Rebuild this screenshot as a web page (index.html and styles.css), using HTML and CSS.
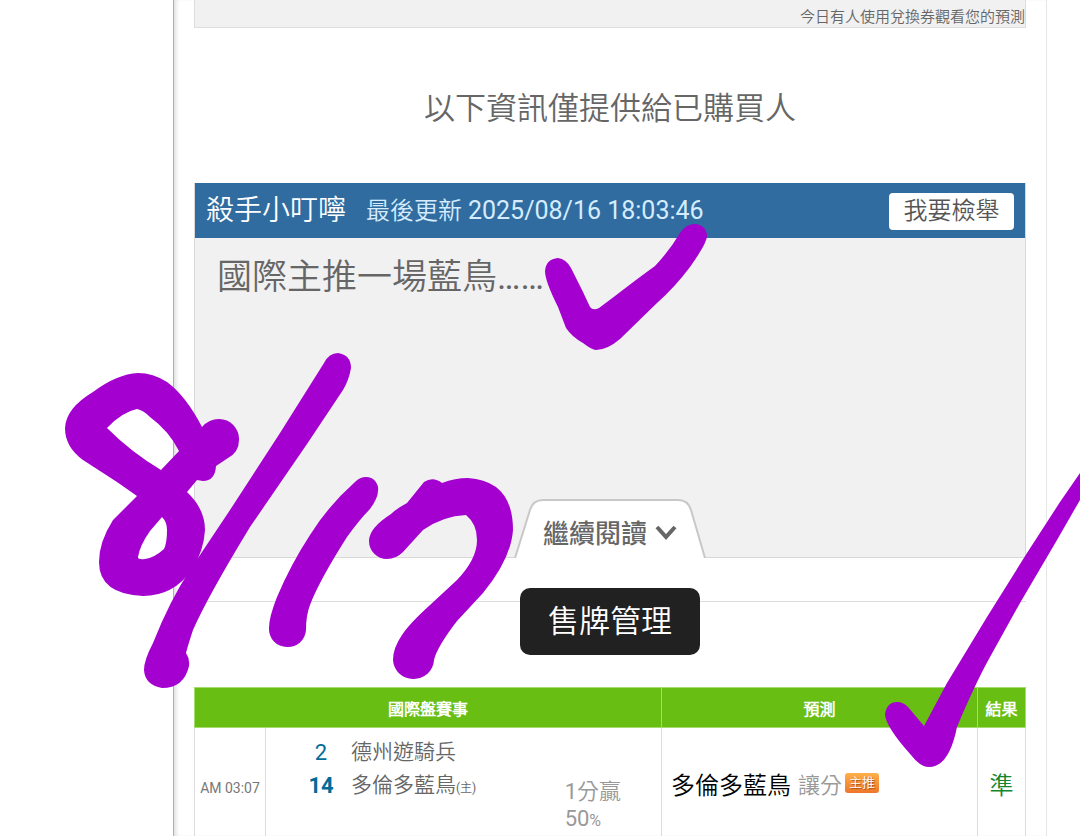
FILE: index.html
```html
<!DOCTYPE html>
<html lang="zh-Hant">
<head>
  <meta charset="utf-8">
  <title>售牌管理</title>
  <link rel="stylesheet" href="styles.css">
</head>
<body>

  <div class="page">
    <div class="notice">今日有人使用兌換券觀看您的預測</div>

    <h1 class="buyer-title">以下資訊僅提供給已購買人</h1>

    <div class="article">
      <div class="article-head">
        <span class="author">殺手小叮嚀</span>
        <span class="updated">最後更新 <span class="date">2025/08/16 18:03:46</span></span>
        <button class="report" type="button">我要檢舉</button>
      </div>
      <div class="article-body">
        <p>國際主推一場藍鳥……</p>
        <button class="more" type="button">
          <svg class="more-shape" viewBox="0 0 192 59" preserveAspectRatio="none">
            <path d="M1 59 L16 11 Q19 1 29 1 H164 Q174 1 177 11 L191 59" fill="#fff" stroke="#c8c8c8" stroke-width="2"/>
          </svg>
          <span class="more-text">繼續閱讀</span>
          <svg class="more-arrow" viewBox="0 0 22 16">
            <path d="M2 3 L11 13 L20 3" fill="none" stroke="#666" stroke-width="4"/>
          </svg>
        </button>
      </div>
    </div>

    <div class="manage">
      <button class="manage-btn" type="button">售牌管理</button>
    </div>

    <table class="games">
      <colgroup>
        <col class="col-time">
        <col class="col-game">
        <col class="col-pick">
        <col class="col-result">
      </colgroup>
      <thead>
        <tr>
          <th colspan="2">國際盤賽事</th>
          <th>預測</th>
          <th>結果</th>
        </tr>
      </thead>
      <tbody>
        <tr>
          <td class="time">AM 03:07</td>
          <td>
            <div class="game">
              <div class="teams">
                <span class="score">2</span><span>德州遊騎兵</span>
                <span class="score win">14</span><span>多倫多藍鳥<small>(主)</small></span>
              </div>
              <div class="odds">1分贏<br>50<small>%</small></div>
            </div>
          </td>
          <td>
            <div class="pick">
              <span class="pick-team">多倫多藍鳥</span>
              <span class="pick-type">讓分</span>
              <span class="tag">主推</span>
            </div>
          </td>
          <td class="result">準</td>
        </tr>
      </tbody>
    </table>
  </div>

  <!-- marker notes -->
  <svg class="ink" viewBox="0 0 1080 836" width="1080" height="836">
    <path fill-rule="evenodd" d="M138 373 Q153 373 167 382 Q186 396 202 427 Q209 419 219 419 A20 20 0 0 1 239 440 Q239 452 228 458 L216 466 Q215 481 203 481 L197 480 L187 492 Q205 509 205 530 Q204 550 192 570 Q173 596 143 596 Q99 594 99 562 Q99 542 113 520 L137 496 L117 482 L83 460 Q65 447 65 428 Q66 408 93 392 Q117 374 138 373 Z
      M107 428 Q122 412 137 409 Q143 410 150 417 Q169 431 179 451 L161 470 Q131 452 107 428 Z
      M162 517 Q167 522 167 530 Q167 543 164 549 Q154 558 145 559 Q138 560 138 557 Q140 545 150 531 Z"/>
    <path d="M324 363 Q329 353 338 353 Q351 355 351 368 Q349 380 343 390 L307 444 L250 527 Q208 596 193 630 Q188 645 186 653 Q190 659 189 666 Q184 688 162 688 Q145 685 144 670 Q144 660 153 643 Q170 600 190 570 L230 510 L280 433 Z"/>
    <path d="M355 482 Q360 477 366 477 A12 12 0 0 1 378 491 Q378 498 370 509 Q360 519 347 537 Q319 581 310 605 Q306 615 306 630 A18 18 0 0 1 287 647 A18 18 0 0 1 269 628 Q269 617 277 597 Q291 564 310 535 Q328 506 355 482 Z"/>
    <path d="M424 482 Q433 476 442 483 Q455 478 468 478 Q513 481 513 530 Q511 559 483 593 L457 621 Q437 647 434 660 A20 20 0 0 1 413 679 A20 20 0 0 1 393 660 Q393 648 402 635 Q409 624 430 605 L457 580 Q477 559 477 540 Q477 524 466 515 Q443 516 423 530 L403 552 Q396 559 387 559 A18 18 0 0 1 369 541 Q369 528 391 514 Q396 509 407 503 Z"/>
    <path d="M558 258 Q566 259 571 268 L583 292 L590 307 Q593 311 599 308 L615 296 Q637 279 655 266 Q670 250 680 233 Q686 224 695 224 A12 12 0 0 1 707 236 Q707 243 690 267 Q675 287 657 303 L620 339 Q607 350 596 350 Q592 350 583 343 Q572 337 566 328 L558 307 Q545 281 545 271 Q546 259 558 258 Z"/>
    <path d="M1080 473 V500 L1057 540 L1020 603 L990 657 Q975 684 957 727 Q949 767 929 767 Q920 767 911 755 Q885 726 885 714 Q887 702 897 702 Q903 702 908 707 L924 726 L947 683 L987 617 L1027 553 L1060 502 Z"/>
  </svg>

</body>
</html>
```
FILE: styles.css
```css
* {
  box-sizing: border-box;
}

body {
  margin: 0;
  background: #fff;
  color: #666;
  font-family: Roboto, "Noto Sans CJK TC DemiLight", "Noto Sans CJK TC", sans-serif;
}

button {
  border: 0;
  padding: 0;
  font-family: inherit;
  cursor: pointer;
}

.page {
  min-height: 100vh;
  margin: 0 33px 0 173px;
  padding: 0 20px;
  border-left: 1px solid #b0b0b0;
  border-right: 1px solid #e6e6e6;
  box-shadow: inset 4px 0 4px -2px #ddd;
}

.notice {
  height: 28px;
  padding-top: 7px;
  border: 1px solid #ddd;
  border-top: 0;
  background: #f1f1f1;
  font-size: 15px;
  line-height: 20px;
  text-align: right;
}

.buyer-title {
  margin: 61px 0 54px;
  font-size: 31px;
  font-weight: 400;
  line-height: 40px;
  text-align: center;
}

.article {
  border: 1px solid #d8d8d8;
  border-top: 0;
  background: #f1f1f1;
}

.article-head {
  display: flex;
  align-items: center;
  height: 55px;
  padding: 1px 11px 0;
  background: #306c9f;
  line-height: 36px;
}

.author {
  margin-right: 20px;
  color: #fff;
  font-size: 28px;
}

.updated {
  color: #d5ecff;
  font-size: 24px;
}

.date {
  font-size: 25px;
}

.report {
  width: 125px;
  height: 37px;
  margin-left: auto;
  border-radius: 4px;
  background: #fff;
  color: #555;
  font-size: 24px;
  line-height: 36px;
}

.article-body {
  display: flex;
  flex-direction: column;
  justify-content: space-between;
  height: 319px;
}

.article-body p {
  margin: 16px 22px;
  font-size: 35px;
  line-height: 48px;
}

.more {
  position: relative;
  display: flex;
  align-items: center;
  justify-content: center;
  gap: 8px;
  align-self: center;
  width: 192px;
  height: 59px;
  margin-bottom: -1px;
  padding-top: 6px;
  background: none;
  color: #666;
  font-family: "Noto Sans CJK TC", sans-serif;
  font-size: 26px;
  font-weight: 500;
}

.more-shape {
  position: absolute;
  top: 0;
  left: 0;
  width: 100%;
  height: 100%;
}

.more-text {
  position: relative;
}

.more-arrow {
  position: relative;
  width: 22px;
  height: 16px;
}

.manage {
  margin-top: 43px;
  border-top: 1px solid #ddd;
  text-align: center;
}

.manage-btn {
  display: block;
  width: 180px;
  height: 67px;
  margin: -14px auto 32px;
  padding-bottom: 6px;
  border-radius: 10px;
  background: #212121;
  color: #fff;
  font-size: 31px;
}

.games {
  width: 100%;
  border-collapse: collapse;
  table-layout: fixed;
}

.col-time {
  width: 71px;
}

.col-pick {
  width: 316px;
}

.col-result {
  width: 48px;
}

.games th {
  height: 40px;
  padding: 0;
  border: 1px solid #a5dc6c;
  background: #69be14;
  color: #fff;
  font-size: 16px;
  font-weight: 700;
}

.games td {
  height: 108px;
  padding: 0;
  border: 1px solid #ddd;
  border-bottom: 0;
  vertical-align: middle;
}

.games td.time {
  padding-top: 11px;
  color: #777;
  font-size: 14px;
  text-align: center;
}

.game {
  display: flex;
  height: 108px;
  padding: 8px 40px 0 27px;
  font-size: 22px;
  line-height: 33px;
}

.teams {
  display: grid;
  grid-template-columns: 56px auto;
  column-gap: 2px;
  align-content: start;
  font-size: 21px;
}

.teams small {
  font-size: 12px;
}

.score {
  color: #006c98;
  font-size: 22px;
  text-align: center;
}

.win {
  font-weight: 700;
}

.odds {
  margin-top: 42px;
  margin-left: auto;
  color: #999;
  line-height: 27px;
}

.odds small {
  font-size: 16px;
}

.pick {
  display: flex;
  align-items: center;
  padding: 2px 0 0 9px;
}

.pick-team {
  margin-right: 7px;
  color: #000;
  font-size: 24px;
}

.pick-type {
  margin-right: 3px;
  color: #999;
  font-size: 22px;
}

.tag {
  width: 34px;
  border-radius: 3px;
  background: linear-gradient(#ffb04a, #ee762b);
  color: #fff;
  font-size: 13px;
  line-height: 20px;
  text-align: center;
  text-shadow: 1px 1px 1px #a04a10;
}

.games td.result {
  padding-top: 2px;
  color: #14852c;
  font-size: 24px;
  text-align: center;
}

.ink {
  position: absolute;
  top: 0;
  left: 0;
  fill: #a400d0;
  pointer-events: none;
}
```
